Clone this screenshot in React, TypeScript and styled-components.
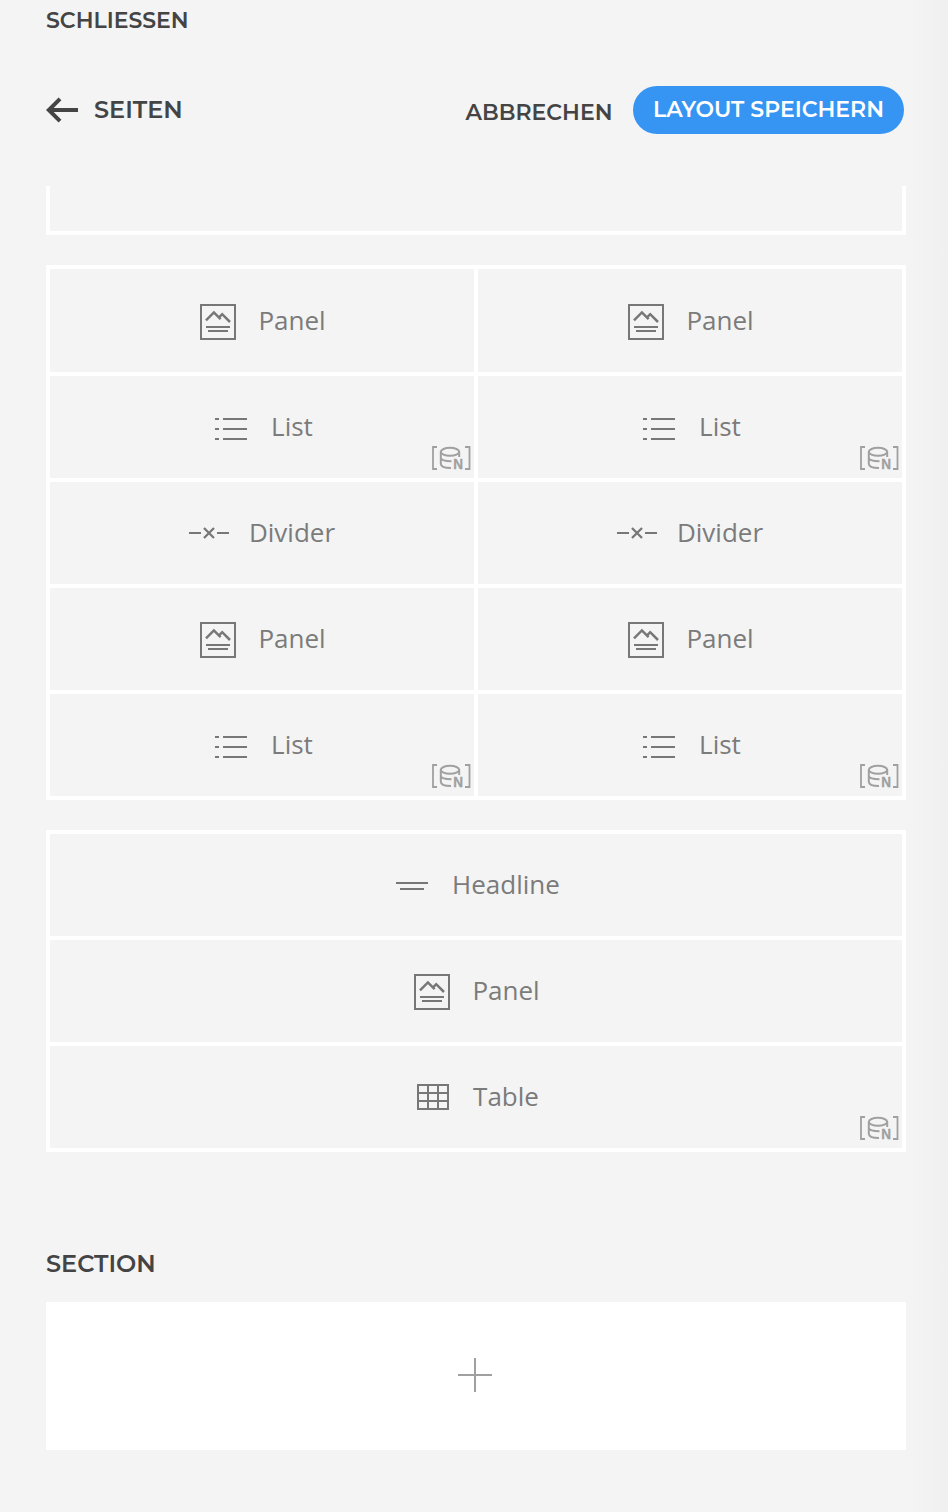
import React from "react";
import styled, { createGlobalStyle } from "styled-components";

const GlobalStyle = createGlobalStyle`
  * { box-sizing: border-box; }
  body {
    margin: 0;
    background: #f4f4f4;
    font-family: "Open Sans", "Noto Sans", sans-serif;
  }
  svg { display: block; flex: none; }
`;

const Page = styled.div`
  height: 1512px;
  padding: 0 42px 0 46px;
  overflow: hidden;
  background: linear-gradient(to right, #f4f4f4 906px, #f0f0f0 948px);
`;

const Caption = styled.div<{ $size: number }>`
  color: #444;
  font-family: Montserrat, Inter, sans-serif;
  font-weight: 600;
  font-size: ${(p) => p.$size}px;
  line-height: 28px;
  white-space: nowrap;
`;

const CloseBar = styled.div`
  height: 86px;
  padding-top: 7px;
`;

const Toolbar = styled.header`
  display: flex;
  align-items: center;
  justify-content: space-between;
  height: 48px;
  padding-right: 2px;
`;

const BackLink = styled.div`
  display: flex;
  align-items: center;
  gap: 16px;
`;

const Actions = styled.div`
  display: flex;
  align-items: center;
  gap: 20.5px;
`;

const CancelLabel = styled(Caption)`
  padding-top: 6px;
`;

const SaveButton = styled.button`
  width: 271px;
  height: 48px;
  padding: 0 0 2px;
  border: 0;
  border-radius: 24px;
  background: #3694f2;
  color: #fff;
  font-family: Montserrat, Inter, sans-serif;
  font-weight: 600;
  font-size: 22px;
  white-space: nowrap;
`;

const Canvas = styled.main`
  display: flex;
  flex-direction: column;
  gap: 30px;
  padding-top: 52px;
`;

const ClippedBlock = styled.div`
  height: 49px;
  border: 4px solid #fff;
  border-top: 0;
`;

const Block = styled.div<{ $columns: number }>`
  display: grid;
  grid-template-columns: repeat(${(p) => p.$columns}, 1fr);
  gap: 4px;
  padding: 4px;
  background: #fff;
`;

const Column = styled.div<{ $lead: number }>`
  display: grid;
  gap: 4px;

  & > :first-child {
    height: ${(p) => 102 + p.$lead}px;
    padding-top: ${(p) => p.$lead}px;
  }
`;

const Cell = styled.div`
  position: relative;
  display: flex;
  align-items: center;
  justify-content: center;
  gap: 20px;
  height: 102px;
  background: #f4f4f4;
  color: #7b7b7b;
`;

const CellLabel = styled.span`
  padding-bottom: 2px;
  font-size: 26px;
  line-height: 36px;
`;

const DataBadge = styled.svg`
  position: absolute;
  right: 3px;
  bottom: 7px;
  overflow: visible;
`;

const SectionTitle = styled(Caption)`
  margin-top: 98px;
`;

const AddSection = styled.div`
  display: flex;
  align-items: center;
  justify-content: center;
  height: 148px;
  margin-top: 24px;
  padding: 0 2px 2px 0;
  width: 860px;
  background: #fff;
`;

type Kind = "Panel" | "List" | "Divider" | "Headline" | "Table";

const icons: Record<Kind, React.ReactNode> = {
  Panel: (
    <>
      <rect x="3" y="4" width="34" height="34" />
      <path d="M8 19.3L15.9 11.4L22.6 18.2M20.8 16.6L24.2 13.2L32 21" strokeWidth="2.5" />
      <path d="M8 26H32M10 30H30" />
    </>
  ),
  List: <path d="M4 12H8M12 12H36M4 22H8M12 22H36M4 32H8M12 32H36" />,
  Divider: (
    <>
      <path d="M0 20H12M28 20H40" />
      <path d="M15 15L25 25M25 15L15 25" strokeWidth="2.3" />
    </>
  ),
  Headline: <path d="M4 18H36M8 24H32" />,
  Table: <path d="M5 8H35V32H5ZM5 16H35M5 24H35M15 8V32M25 8V32" />,
};

const dataBound: Kind[] = ["List", "Table"];

function Widget({ kind }: { kind: Kind }) {
  return (
    <Cell>
      <svg width="40" height="40" fill="none" stroke="#777" strokeWidth="2">
        {icons[kind]}
      </svg>
      <CellLabel>{kind}</CellLabel>
      {dataBound.includes(kind) && (
        <DataBadge width="40" height="26" fill="none" stroke="#a0a0a0" strokeWidth="2">
          <path d="M6 2H2V24H6M34 2H38.5V24H34" strokeWidth="1.8" />
          <ellipse cx="19" cy="6.8" rx="9.2" ry="4" />
          <path d="M9.8 6.8V18.5C9.8 21.8 13 23 20 23M9.8 12.5C9.8 15 13 16.2 20.5 16.2M28.2 6.8V12" />
          <text
            x="22.2"
            y="24"
            textLength="9.8"
            lengthAdjust="spacingAndGlyphs"
            fill="#a0a0a0"
            stroke="#a0a0a0"
            strokeWidth="0.3"
            fontSize="14"
            fontWeight="700"
            fontFamily="Liberation Sans"
          >
            N
          </text>
        </DataBadge>
      )}
    </Cell>
  );
}

const stack: Kind[] = ["Panel", "List", "Divider", "Panel", "List"];
const blocks: { columns: Kind[][]; lead: number }[] = [
  { columns: [stack, stack], lead: 1 },
  { columns: [["Headline", "Panel", "Table"]], lead: 0 },
];

export default function App() {
  return (
    <Page>
      <GlobalStyle />
      <CloseBar>
        <Caption $size={22}>SCHLIESSEN</Caption>
      </CloseBar>
      <Toolbar>
        <BackLink>
          <svg width="32" height="26" fill="none" stroke="#444" strokeWidth="4">
            <path d="M32 13H3M14 1.8L2.8 13L14 24.2" />
          </svg>
          <Caption $size={24}>SEITEN</Caption>
        </BackLink>
        <Actions>
          <CancelLabel $size={22}>ABBRECHEN</CancelLabel>
          <SaveButton>LAYOUT SPEICHERN</SaveButton>
        </Actions>
      </Toolbar>
      <Canvas>
        <ClippedBlock />
        {blocks.map((block, i) => (
          <Block key={i} $columns={block.columns.length}>
            {block.columns.map((kinds, c) => (
              <Column key={c} $lead={block.lead}>
                {kinds.map((kind, k) => (
                  <Widget key={k} kind={kind} />
                ))}
              </Column>
            ))}
          </Block>
        ))}
      </Canvas>
      <SectionTitle $size={24}>SECTION</SectionTitle>
      <AddSection>
        <svg width="34" height="34" fill="none" stroke="#a0a0a0" strokeWidth="2">
          <path d="M17 0V34M0 17H34" />
        </svg>
      </AddSection>
    </Page>
  );
}
